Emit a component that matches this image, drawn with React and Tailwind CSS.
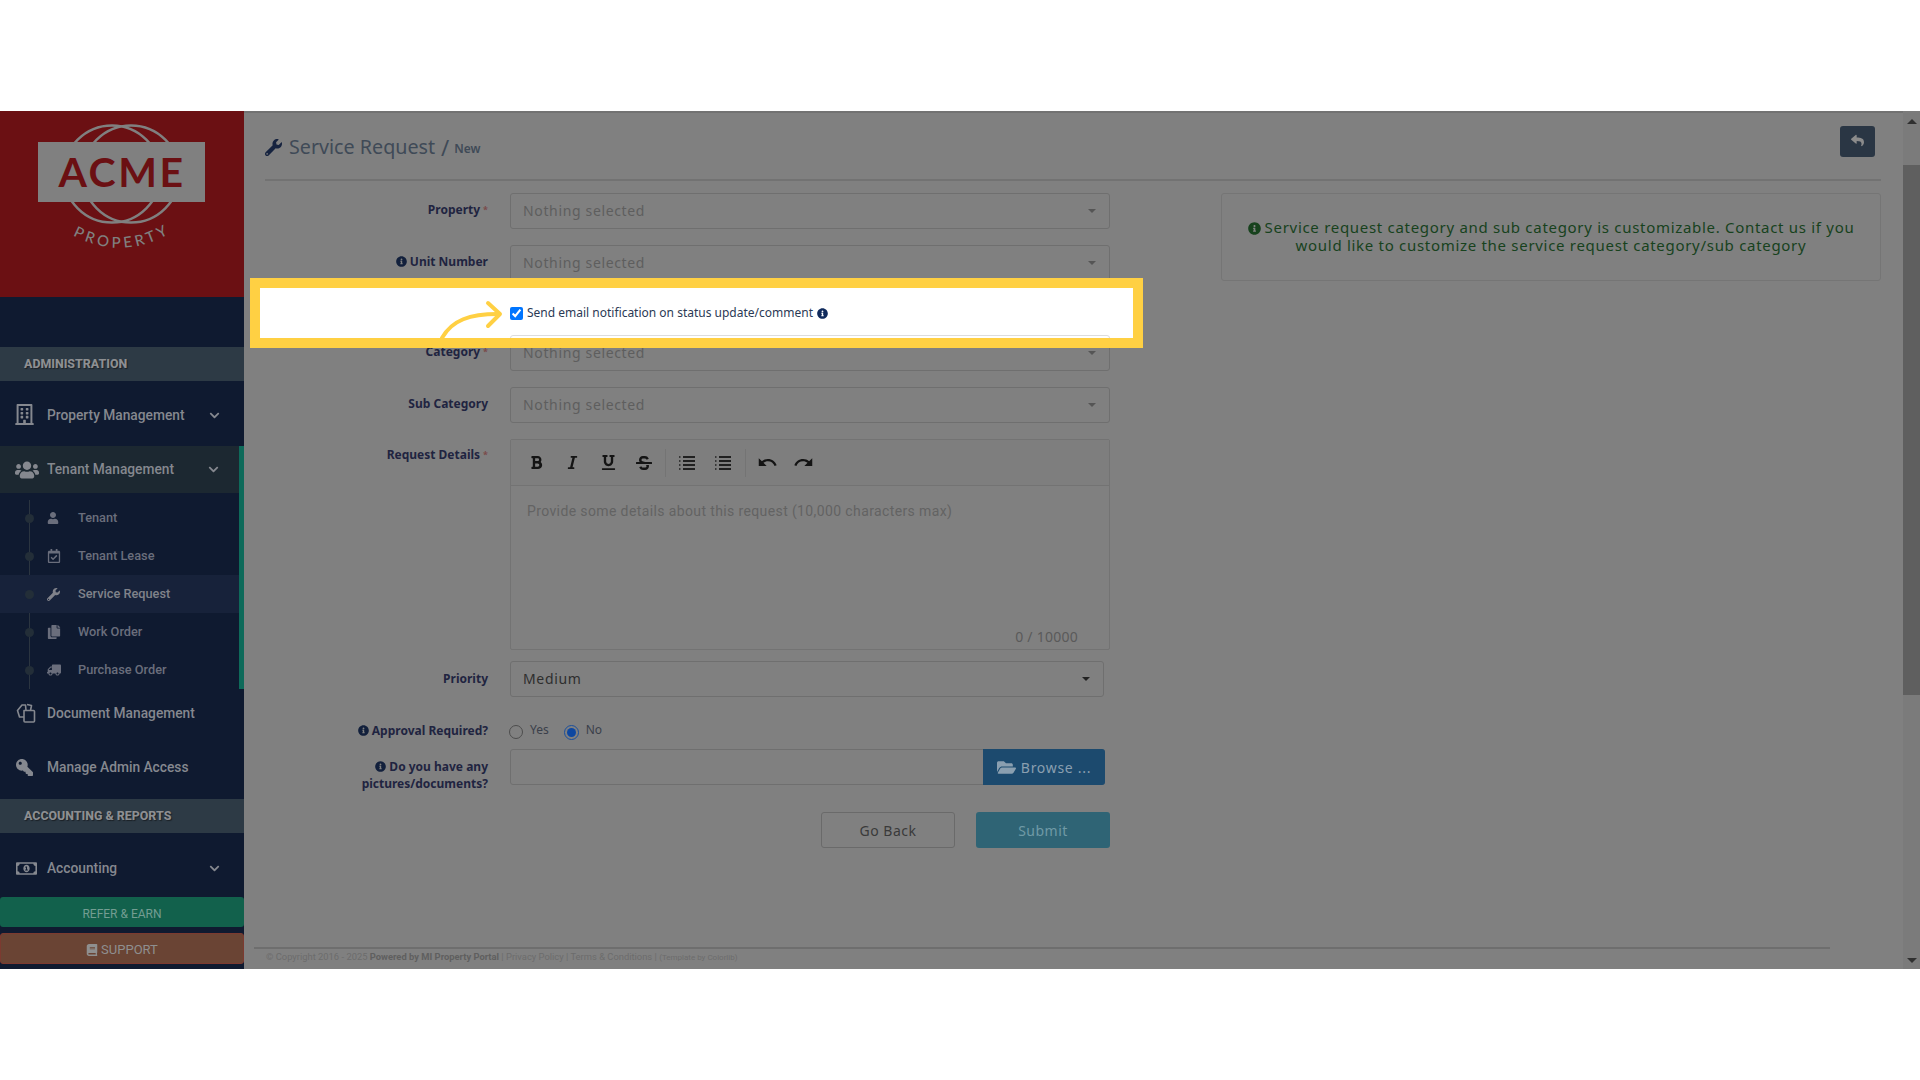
import React from 'react'
import {
    FaBold, FaBook, FaChevronDown, FaFolderOpen, FaInfoCircle, FaItalic, FaKey, FaRegBuilding, FaRegCalendarCheck, FaRegMoneyBillAlt,
    FaReply, FaStrikethrough, FaTruck, FaUnderline, FaUser, FaUsers, FaWrench, FaCopy,
} from 'react-icons/fa'
import { MdRedo, MdUndo } from 'react-icons/md'

const subItems = [
    { label: 'Tenant', icon: FaUser, size: 12 },
    { label: 'Tenant Lease', icon: FaRegCalendarCheck, size: 14 },
    { label: 'Service Request', icon: FaWrench, size: 13, active: true },
    { label: 'Work Order', icon: FaCopy, size: 14 },
    { label: 'Purchase Order', icon: FaTruck, size: 14, flip: true },
]

function Logo() {
    return (
        <svg width="244" height="186" viewBox="0 111 244 186">
            <circle cx="112" cy="174" r="48.5" fill="none" stroke="#808080" strokeWidth="2.5" />
            <circle cx="131" cy="174" r="48.5" fill="none" stroke="#808080" strokeWidth="2.5" />
            <rect x="38" y="142" width="167" height="60" fill="#808080" />
            <text x="122" y="187" textAnchor="middle" fontFamily="Lato, sans-serif" fontWeight="700" fontSize="41" letterSpacing="2.5" fill="#6b1013">ACME</text>
            <path id="logo-arc" d="M 72 235 Q 122 262 172 232" fill="none" />
            <text fontFamily="Lato, sans-serif" fontWeight="500" fontSize="15" fill="#808080" letterSpacing="3.5">
                <textPath href="#logo-arc" startOffset="50%" textAnchor="middle">PROPERTY</textPath>
            </text>
        </svg>
    )
}

function DocsIcon() {
    return (
        <svg width="20" height="20" viewBox="0 0 20 20" fill="none" stroke="currentColor" strokeWidth="1.6" strokeLinejoin="round">
            <path d="M8 7.5H17.5A1 1 0 0 1 18.5 8.5V18A1 1 0 0 1 17.5 19H9A1 1 0 0 1 8 18Z" />
            <path d="M8 14H3.5L1.5 7.5L6 2H9.5L10 7.5" />
            <path d="M11 1.5L15.5 2.5L14.5 7.5" />
        </svg>
    )
}

function SectionHeader({ children }) {
    return (
        <div className="h-[34px] flex items-center pl-6 bg-[#2d3a45] text-[12.4px] font-extrabold text-[#8d8f92] [text-shadow:1px_1px_1px_#1b2026]">
            {children}
        </div>
    )
}

function NavRow({ icon: Icon, label, size = 18, chevron, iconClass = '', className = '' }) {
    return (
        <div className={`flex items-center pl-4 text-[13.75px] font-medium text-[#85888f] ${className}`}>
            <span className="w-[31px] flex shrink-0">
                <Icon size={size} className={iconClass} />
            </span>
            <span>{label}</span>
            {chevron && <FaChevronDown size={11} className="ml-auto" />}
        </div>
    )
}

function Sidebar() {
    return (
        <aside className="w-[244px] shrink-0 flex flex-col bg-[#0f1a30] font-['Roboto',sans-serif]">
            <div className="h-[186px] bg-[#6b1013]">
                <Logo />
            </div>
            <div className="h-[50px]" />
            <SectionHeader>ADMINISTRATION</SectionHeader>
            <NavRow icon={FaRegBuilding} label="Property Management" size={21} iconClass="-ml-[2px] -mt-[2px]" chevron className="h-[65px] pt-[3px] pr-[24px]" />
            <NavRow icon={FaUsers} label="Tenant Management" size={24} iconClass="-ml-[1px]" chevron className="h-[47px] bg-[#1c2831] border-r-[5px] border-[#0e6a5a] pr-[20px]" />
            <div className="relative h-[196px] pt-[6px] border-r-[5px] border-[#0e6a5a]">
                <div className="absolute left-[29px] top-[7px] bottom-0 w-px bg-[#2b3540]" />
                {subItems.map((item) => (
                    <div key={item.label} className={`relative h-[38px] flex items-center pl-[47px] text-[12.75px] font-medium ${item.active ? 'bg-[#17223a] text-[#80828a]' : 'text-[#6a6e7c]'}`}>
                        <span className="absolute left-[25px] top-[15px] w-[9px] h-[9px] rounded-full bg-[#232e38]" />
                        <span className="w-[32px] -mr-[1px] flex shrink-0">
                            <item.icon size={item.size} className={item.flip ? '-scale-x-100' : ''} />
                        </span>
                        <span>{item.label}</span>
                    </div>
                ))}
            </div>
            <NavRow icon={DocsIcon} label="Document Management" className="h-[50px] pb-[2px]" />
            <NavRow icon={FaKey} label="Manage Admin Access" className="h-[60px] pb-[4px]" size={17} iconClass="-scale-x-100" />
            <SectionHeader>ACCOUNTING &amp; REPORTS</SectionHeader>
            <NavRow icon={FaRegMoneyBillAlt} label="Accounting" size={21} chevron className="h-[64px] pt-[6px] pr-[24px]" />
            <div className="h-[30px] pt-[3px] flex items-center justify-center rounded-[3px] bg-[#12614c] text-[12px] text-[#739d92]">REFER &amp; EARN</div>
            <div className="mt-[6px] h-[31px] pt-[3px] flex items-center justify-center gap-[3px] rounded-[3px] border border-[#7c3a30] bg-[#6a4434] text-[13px] text-[#8f8f8f]">
                <FaBook size={12} />
                SUPPORT
            </div>
        </aside>
    )
}

function Caret({ dark }) {
    return <span className={`ml-auto w-0 h-0 border-x-[4px] border-x-transparent border-t-[4px] ${dark ? 'border-t-[#222222]' : 'border-t-[#555555]'}`} />
}

function Label({ children, required, info, className = '' }) {
    return (
        <div className={`w-[223px] shrink-0 text-right text-[12px] leading-[17px] font-bold text-[#1f2440] ${className}`}>
            {info && <FaInfoCircle size={11} className="inline mr-[3px] mb-[2px] text-[#12203c]" />}
            {children}
            {required && <span className="ml-[3px] align-top text-[9px] text-[#7a4a4a]">*</span>}
        </div>
    )
}

function SelectRow({ label, value = 'Nothing selected', required, info, className = '', labelClass = 'pt-[8px]', width = 'w-[600px]', dark }) {
    return (
        <div className={`flex ${className}`}>
            <Label required={required} info={info} className={labelClass}>{label}</Label>
            <div className={`ml-[22px] h-[36px] flex items-center pl-[12px] pr-[13px] pb-[1px] rounded-[3px] border border-[#6f6f6f] text-[14px] tracking-[0.65px] ${width} ${dark ? 'text-[#2e2e2e]' : 'text-[#5e5e5e]'}`}>
                {value}
                <Caret dark={dark} />
            </div>
        </div>
    )
}

function ListIcon() {
    return (
        <svg width="18" height="16" viewBox="0 0 18 16" fill="none" stroke="#202020">
            <path d="M5 2H17M5 6H17M5 10H17M5 14H17" strokeWidth="2" />
            <path d="M1 2H2.5M1 6H2.5M1 10H2.5M1 14H2.5" strokeWidth="1.5" />
        </svg>
    )
}

function ToolButton({ children }) {
    return <span className="w-[36px] h-[36px] flex items-center justify-center text-[#141414]">{children}</span>
}

function Editor() {
    return (
        <div className="flex mt-[16px]">
            <Label required className="pt-[7px]">Request Details</Label>
            <div className="ml-[22px] w-[600px] h-[211px] flex flex-col rounded-[2px] border border-[#737373]">
                <div className="h-[46px] shrink-0 flex items-center pl-[7px] border-b border-[#737373] bg-[#7e7e7e]">
                    <ToolButton><FaBold size={15} /></ToolButton>
                    <ToolButton><FaItalic size={15} /></ToolButton>
                    <ToolButton><FaUnderline size={15} /></ToolButton>
                    <ToolButton><FaStrikethrough size={16} /></ToolButton>
                    <span className="mx-[3px] w-px h-[28px] bg-[#747474]" />
                    <ToolButton><ListIcon /></ToolButton>
                    <ToolButton><ListIcon /></ToolButton>
                    <span className="ml-[4px] mr-[3px] w-px h-[28px] bg-[#747474]" />
                    <ToolButton><MdUndo size={21} /></ToolButton>
                    <ToolButton><MdRedo size={21} /></ToolButton>
                </div>
                <div className="flex-1 flex flex-col pl-[16px] pr-[17px] pt-[15px] pb-[2px]">
                    <span className="font-['Roboto',sans-serif] text-[14px] tracking-[0.38px] text-[#636363]">Provide some details about this request (10,000 characters max)</span>
                    <span className="mt-auto self-end mr-[14px] text-[14px] tracking-[0.25px] text-[#5a5a5a]">0 / 10000</span>
                </div>
            </div>
        </div>
    )
}

function Radio({ checked }) {
    return checked ? (
        <span className="w-[15px] h-[15px] flex items-center justify-center rounded-full border border-[#1b4f9c]">
            <span className="w-[9px] h-[9px] rounded-full bg-[#0d47a1]" />
        </span>
    ) : (
        <span className="w-[14px] h-[14px] rounded-full border border-[#4d4d4d]" />
    )
}

function Form() {
    return (
        <div className="w-[845px] shrink-0 pt-[12px]">
            <SelectRow label="Property" required />
            <SelectRow label="Unit Number" info className="mt-[16px]" />

            <div className="relative z-[2] flex mt-[22px] h-[20px]">
                <div className="ml-[245px] flex items-center text-[12px] text-[#2b3a55]">
                    <input type="checkbox" defaultChecked className="w-[13px] h-[13px] mr-[4px]" />
                    Send email notification on status update/comment
                    <FaInfoCircle size={11} className="ml-[4px] text-[#0f2a5c]" />
                </div>
            </div>

            <SelectRow label="Category" required className="mt-[12px]" />
            <SelectRow label="Sub Category" className="mt-[16px]" />
            <Editor />
            <SelectRow label="Priority" value="Medium" dark width="w-[594px]" labelClass="pt-[9px]" className="mt-[11px]" />

            <div className="flex items-center mt-[25px] h-[17px]">
                <Label info>Approval Required?</Label>
                <div className="ml-[21px] flex items-center text-[12px] text-[#3a3f4a]">
                    <span className="mt-[3px] flex"><Radio /></span>
                    <span className="ml-[7px] mb-[2px]">Yes</span>
                    <span className="ml-[15px] mt-[3px] flex"><Radio checked /></span>
                    <span className="ml-[7px] mb-[2px]">No</span>
                </div>
            </div>

            <div className="flex h-[36px] mt-[10px]">
                <Label info className="pt-[9px]">Do you have any<br />pictures/documents?</Label>
                <div className="ml-[22px] w-[595px] h-[36px] flex rounded-[3px] border border-[#6f6f6f]">
                    <div className="flex-1" />
                    <div className="w-[122px] -my-px -mr-px flex items-center justify-center gap-[5px] rounded-r-[3px] bg-[#1c4a6e] text-[14px] tracking-[0.7px] text-[#8a9fb0]">
                        <FaFolderOpen size={19} />
                        Browse ...
                    </div>
                </div>
            </div>

            <div className="flex mt-[27px] ml-[556px] gap-[21px] text-[14px] tracking-[0.5px]">
                <div className="w-[134px] h-[36px] flex items-center justify-center rounded-[3px] border border-[#6a6a6a] text-[#3a3a3a]">Go Back</div>
                <div className="w-[134px] h-[36px] flex items-center justify-center rounded-[3px] bg-[#2f6475] text-[#6f9aa6]">Submit</div>
            </div>
        </div>
    )
}

function Highlight() {
    return (
        <div className="absolute z-[1] left-[6px] top-[165px] w-[893px] h-[70px] border-[10px] border-[#ffd043] bg-white overflow-hidden">
            <div className="absolute left-[250px] top-[47px] w-[600px] h-[10px] rounded-t-[3px] border border-[#dddddd]" />
            <svg className="absolute left-0 top-0" width="873" height="50" fill="none" stroke="#ffd043" strokeWidth="4" strokeLinecap="round" strokeLinejoin="round">
                <path d="M182 50C192 32 210 26 238 26" />
                <path d="M228 15L240 26L228 38" />
            </svg>
        </div>
    )
}

function Main() {
    return (
        <main className="relative flex-1 flex flex-col border-t-2 border-[#727272] bg-[#808080] font-['Noto_Sans',sans-serif]">
            <Highlight />
            <div className="pl-[21px] pr-[22px]">
                <div className="h-[68px] flex items-start border-b-2 border-[#727272]">
                    <div className="mt-[19px] flex items-center text-[#3f4a57]">
                        <FaWrench size={17} className="text-[#16233f] mt-[1px]" />
                        <span className="ml-[7px] text-[19.7px]">Service Request</span>
                        <span className="ml-[6px] text-[22px] leading-[28px]">/</span>
                        <span className="ml-[5px] mt-[5px] text-[12px] font-semibold">New</span>
                    </div>
                    <div className="ml-auto mr-[6px] mt-[13px] w-[35px] h-[31px] flex items-center justify-center rounded-[3px] bg-[#2a3644] text-[#8b8b8b]">
                        <FaReply size={13} className="mb-[3px]" />
                    </div>
                </div>
                <div className="flex">
                    <Form />
                    <div className="ml-auto mt-[12px] w-[660px] h-[88px] pb-[2px] flex items-center justify-center px-[20px] rounded-[3px] border border-[#757575] text-center text-[15px] leading-[16px] tracking-[0.7px] text-[#17421d]">
                        <p>
                            <FaInfoCircle size={13} className="inline mr-[4px] mb-[2px]" />
                            Service request category and sub category is customizable. Contact us if you would like to customize the service request category/sub category
                        </p>
                    </div>
                </div>
            </div>
            <div className="mt-auto ml-[10px] mr-[73px] h-[22px] pb-[3px] flex items-center pl-[12px] border-t-2 border-[#6e6e6e] font-['Roboto',sans-serif] text-[9.4px] text-[#6c6c6c]">
                © Copyright 2016 - 2025&nbsp;<span className="font-bold text-[#5f5f5f]">Powered by MI Property Portal</span>&nbsp;| Privacy Policy | Terms &amp; Conditions |&nbsp;<span className="text-[8px]">(Template by Colorlib)</span>
            </div>
        </main>
    )
}

function Scrollbar() {
    return (
        <div className="w-[17px] shrink-0 flex flex-col items-center bg-[#7b7b7b]">
            <span className="mt-[8px] w-0 h-0 border-x-[5px] border-x-transparent border-b-[5px] border-b-[#303030]" />
            <span className="mt-[41px] w-full h-[530px] bg-[#5f5f5f]" />
            <span className="mt-auto mb-[6px] w-0 h-0 border-x-[5px] border-x-transparent border-t-[5px] border-t-[#303030]" />
        </div>
    )
}

export default function App() {
    return (
        <div className="w-[1920px] h-[1080px] flex flex-col bg-white overflow-hidden">
            <div className="h-[111px]" />
            <div className="h-[858px] flex">
                <Sidebar />
                <Main />
                <Scrollbar />
            </div>
        </div>
    )
}
